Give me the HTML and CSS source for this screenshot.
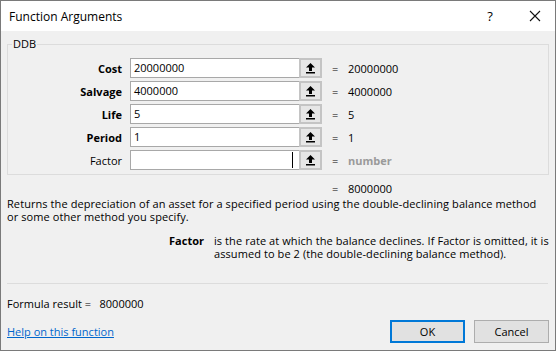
FILE: index.html
```html
<!DOCTYPE html>
<html>
<head>
<meta charset="utf-8">
<link rel="stylesheet" href="styles.css">
</head>
<body>
<div class="window">
  <div class="titlebar">
    <span class="title">Function Arguments</span>
    <span class="tb-btn help">?</span>
    <span class="tb-btn close">
      <svg width="12" height="12" viewBox="0 0 12 12"><path d="M1 1 L11 11 M11 1 L1 11" stroke="#111" stroke-width="1.1" fill="none"/></svg>
    </span>
  </div>
  <div class="content">
    <fieldset class="group">
      <legend>DDB</legend>
      <div class="row">
        <span class="label bold">Cost</span>
        <span class="field">20000000</span>
        <span class="pick"><svg width="9" height="11" viewBox="0 0 9 11"><path d="M4.5 0 L9 4.5 L6 4.5 L6 8 L3 8 L3 4.5 L0 4.5 Z" fill="#000"/><rect x="0" y="9" width="9" height="1.5" fill="#000"/></svg></span>
        <span class="eq">=</span>
        <span class="val">20000000</span>
      </div>
      <div class="row">
        <span class="label bold">Salvage</span>
        <span class="field">4000000</span>
        <span class="pick"><svg width="9" height="11" viewBox="0 0 9 11"><path d="M4.5 0 L9 4.5 L6 4.5 L6 8 L3 8 L3 4.5 L0 4.5 Z" fill="#000"/><rect x="0" y="9" width="9" height="1.5" fill="#000"/></svg></span>
        <span class="eq">=</span>
        <span class="val">4000000</span>
      </div>
      <div class="row">
        <span class="label bold">Life</span>
        <span class="field">5</span>
        <span class="pick"><svg width="9" height="11" viewBox="0 0 9 11"><path d="M4.5 0 L9 4.5 L6 4.5 L6 8 L3 8 L3 4.5 L0 4.5 Z" fill="#000"/><rect x="0" y="9" width="9" height="1.5" fill="#000"/></svg></span>
        <span class="eq">=</span>
        <span class="val">5</span>
      </div>
      <div class="row">
        <span class="label bold">Period</span>
        <span class="field">1</span>
        <span class="pick"><svg width="9" height="11" viewBox="0 0 9 11"><path d="M4.5 0 L9 4.5 L6 4.5 L6 8 L3 8 L3 4.5 L0 4.5 Z" fill="#000"/><rect x="0" y="9" width="9" height="1.5" fill="#000"/></svg></span>
        <span class="eq">=</span>
        <span class="val">1</span>
      </div>
      <div class="row">
        <span class="label">Factor</span>
        <span class="field focus"><span class="caret"></span></span>
        <span class="pick"><svg width="9" height="11" viewBox="0 0 9 11"><path d="M4.5 0 L9 4.5 L6 4.5 L6 8 L3 8 L3 4.5 L0 4.5 Z" fill="#000"/><rect x="0" y="9" width="9" height="1.5" fill="#000"/></svg></span>
        <span class="eq">=</span>
        <span class="val muted">number</span>
      </div>
    </fieldset>

    <div class="result-row">
      <span class="eq">=</span>
      <span class="val">8000000</span>
    </div>
    <p class="desc">Returns the depreciation of an asset for a specified period using the double-declining balance method<br>or some other method you specify.</p>

    <div class="argdesc">
      <span class="argname">Factor</span>
      <span class="argtext">is the rate at which the balance declines. If Factor is omitted, it is<br>assumed to be 2 (the double-declining balance method).</span>
    </div>

    <div class="sep"></div>

    <div class="formula">Formula result =&nbsp;&nbsp;&nbsp;8000000</div>

    <div class="footer">
      <a class="helplink" href="#">Help on this function</a>
      <div class="buttons">
        <span class="btn default">OK</span>
        <span class="btn">Cancel</span>
      </div>
    </div>
  </div>
</div>
</body>
</html>
```

FILE: styles.css
```css
html, body {
  margin: 0;
  padding: 0;
  background: #f0f0f0;
}
body {
  font-family: "Open Sans", "Noto Sans", sans-serif;
  font-size: 11px;
  color: #000;
}
.window {
  width: 556px;
  height: 351px;
  box-sizing: border-box;
  border: 1px solid #7a7a7a;
  background: #f0f0f0;
  display: flex;
  flex-direction: column;
}
.titlebar {
  height: 30px;
  background: #fff;
  display: flex;
  align-items: center;
  font-size: 12px;
}
.title {
  padding-left: 8px;
  flex: 1;
  color: #000;
}
.tb-btn {
  display: flex;
  align-items: center;
  justify-content: center;
  width: 44px;
  height: 30px;
  font-size: 13px;
}
.help {
  margin-right: 1px;
}
.close {
  margin-right: -2px;
}
.content {
  padding: 0 6px;
  display: flex;
  flex-direction: column;
}
.group {
  margin: 5px 0 0 0;
  padding: 6px 0 4px 0;
  border: 1px solid #dcdcdc;
  display: flex;
  flex-direction: column;
  gap: 3px;
}
.group legend {
  padding: 0 1px;
  margin-left: 4px;
  line-height: 16px;
}
.row {
  display: flex;
  align-items: center;
  height: 20px;
}
.label {
  width: 114px;
  text-align: right;
  margin-right: 8px;
}
.bold {
  font-weight: bold;
}
.field {
  width: 169px;
  height: 20px;
  box-sizing: border-box;
  border: 1px solid #a8a8a8;
  border-right: none;
  background: #fff;
  padding-left: 3px;
  line-height: 18px;
  position: relative;
}
.caret {
  position: absolute;
  right: 6px;
  top: 1px;
  width: 1px;
  height: 16px;
  background: #000;
}
.pick {
  width: 23px;
  height: 20px;
  box-sizing: border-box;
  border: 2px solid #c4c4c4;
  background: #e6e6e6;
  display: flex;
  align-items: center;
  justify-content: center;
}
.eq {
  margin-left: 10px;
  width: 16px;
}
.val {
  color: #000;
}
.muted {
  color: #9a9a9a;
  font-weight: bold;
}
.result-row {
  display: flex;
  margin-top: 7px;
  padding-left: 318px;
  line-height: 13px;
}
.result-row .eq {
  margin-left: 7px;
}
.desc {
  margin: 2px 0 0 0;
  line-height: 13px;
  white-space: nowrap;
  letter-spacing: 0.08px;
}
.argdesc {
  display: flex;
  margin-top: 11px;
  line-height: 13px;
  white-space: nowrap;
}
.argname {
  width: 197px;
  text-align: right;
  font-weight: bold;
  margin-right: 10px;
}
.argtext {
  letter-spacing: 0.08px;
}
.sep {
  height: 1px;
  background: #dcdcdc;
  margin-top: 23px;
  margin-right: 1px;
}
.formula {
  margin-top: 13px;
  line-height: 13px;
}
.footer {
  display: flex;
  align-items: center;
  justify-content: space-between;
  margin-top: 10px;
}
.helplink {
  color: #0066cc;
  text-decoration: underline;
}
.buttons {
  display: flex;
  gap: 9px;
}
.btn {
  width: 75px;
  height: 23px;
  box-sizing: border-box;
  border: 1px solid #adadad;
  background: #e1e1e1;
  display: flex;
  align-items: center;
  justify-content: center;
}
.btn.default {
  border: 2px solid #0078d7;
}
```
